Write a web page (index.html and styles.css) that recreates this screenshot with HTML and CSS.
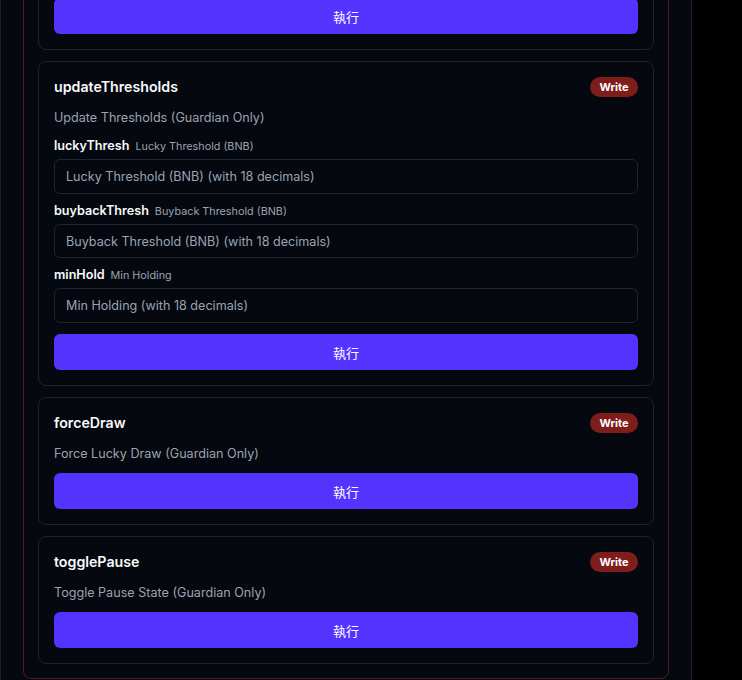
FILE: index.html
```html
<!DOCTYPE html>
<html lang="zh-Hant">
<head>
<meta charset="utf-8">
<title>Contract Functions</title>
<link rel="stylesheet" href="styles.css">
</head>
<body>
<div class="panel">
  <section class="group">
    <div class="card">
      <div class="card-head">
        <span class="fn-name">updateTreasury</span>
        <span class="badge">Write</span>
      </div>
      <p class="fn-desc">Update Treasury Address (Guardian Only)</p>
      <button class="exec" type="button">執行</button>
    </div>

    <div class="card">
      <div class="card-head">
        <span class="fn-name">updateThresholds</span>
        <span class="badge">Write</span>
      </div>
      <p class="fn-desc">Update Thresholds (Guardian Only)</p>
      <div class="fields">
        <div class="field">
          <label class="field-label"><span class="arg-name">luckyThresh</span><span class="arg-hint">Lucky Threshold (BNB)</span></label>
          <input class="arg-input" type="text" placeholder="Lucky Threshold (BNB) (with 18 decimals)">
        </div>
        <div class="field">
          <label class="field-label"><span class="arg-name">buybackThresh</span><span class="arg-hint">Buyback Threshold (BNB)</span></label>
          <input class="arg-input" type="text" placeholder="Buyback Threshold (BNB) (with 18 decimals)">
        </div>
        <div class="field">
          <label class="field-label"><span class="arg-name">minHold</span><span class="arg-hint">Min Holding</span></label>
          <input class="arg-input" type="text" placeholder="Min Holding (with 18 decimals)">
        </div>
      </div>
      <button class="exec" type="button">執行</button>
    </div>

    <div class="card">
      <div class="card-head">
        <span class="fn-name">forceDraw</span>
        <span class="badge">Write</span>
      </div>
      <p class="fn-desc">Force Lucky Draw (Guardian Only)</p>
      <button class="exec" type="button">執行</button>
    </div>

    <div class="card">
      <div class="card-head">
        <span class="fn-name">togglePause</span>
        <span class="badge">Write</span>
      </div>
      <p class="fn-desc">Toggle Pause State (Guardian Only)</p>
      <button class="exec" type="button">執行</button>
    </div>
  </section>
</div>
</body>
</html>
```

FILE: styles.css
```css
* {
  box-sizing: border-box;
}

html, body {
  margin: 0;
  padding: 0;
  background: #000000;
}

body {
  font-family: Inter, "Noto Sans CJK TC", "Noto Sans", sans-serif;
  color: #f3f4f6;
  overflow: hidden;
}

.panel {
  width: 692px;
  min-height: 100vh;
  background: #05080f;
  border-left: 1px solid #1a202b;
  border-right: 1px solid #1f2733;
  padding: 0 22px 40px 22px;
}

/* simulates the scrolled position of the list */
.group {
  margin-top: -93px;
  border: 1px solid #4d1c25;
  border-radius: 8px;
  padding: 14px;
  display: flex;
  flex-direction: column;
  gap: 11px;
}

.card {
  border: 1px solid #1d232e;
  border-radius: 8px;
  padding: 15px;
  display: flex;
  flex-direction: column;
}

.card-head {
  display: flex;
  justify-content: space-between;
  align-items: center;
  height: 20px;
}

.fn-name {
  font-size: 14.2px;
  font-weight: 600;
  line-height: 20px;
  color: #f9fafb;
}

.badge {
  display: inline-flex;
  align-items: center;
  justify-content: center;
  width: 48px;
  height: 20px;
  border-radius: 10px;
  background: #7f1d1d;
  color: #ffffff;
  font-size: 11px;
  font-weight: 700;
}

.fn-desc {
  margin: 11px 0 9px 0;
  font-size: 12.6px;
  line-height: 20px;
  color: #9ca3af;
}

.fields {
  display: flex;
  flex-direction: column;
  gap: 8px;
  margin-bottom: 11px;
}

.field {
  display: flex;
  flex-direction: column;
  gap: 4px;
}

.field-label {
  display: flex;
  align-items: baseline;
  gap: 6px;
  height: 18px;
  line-height: 18px;
}

.arg-name {
  font-size: 12.6px;
  font-weight: 600;
  color: #f9fafb;
}

.arg-hint {
  font-size: 10.8px;
  color: #9ca3af;
}

.arg-input {
  display: block;
  width: 100%;
  height: 34.7px;
  margin: 0;
  padding: 0 11px;
  border: 1px solid #1f2530;
  border-radius: 6px;
  background: #05080f;
  color: #e5e7eb;
  font-family: Inter, "Noto Sans", sans-serif;
  font-size: 12.6px;
  outline: none;
}

.arg-input::placeholder {
  color: #9aa3b2;
  opacity: 1;
}

.exec {
  display: block;
  width: 100%;
  height: 36px;
  margin: 0;
  border: none;
  border-radius: 6px;
  background: #5533ff;
  color: #ffffff;
  font-family: Inter, "Noto Sans CJK TC", sans-serif;
  font-size: 13px;
  cursor: pointer;
}
```
